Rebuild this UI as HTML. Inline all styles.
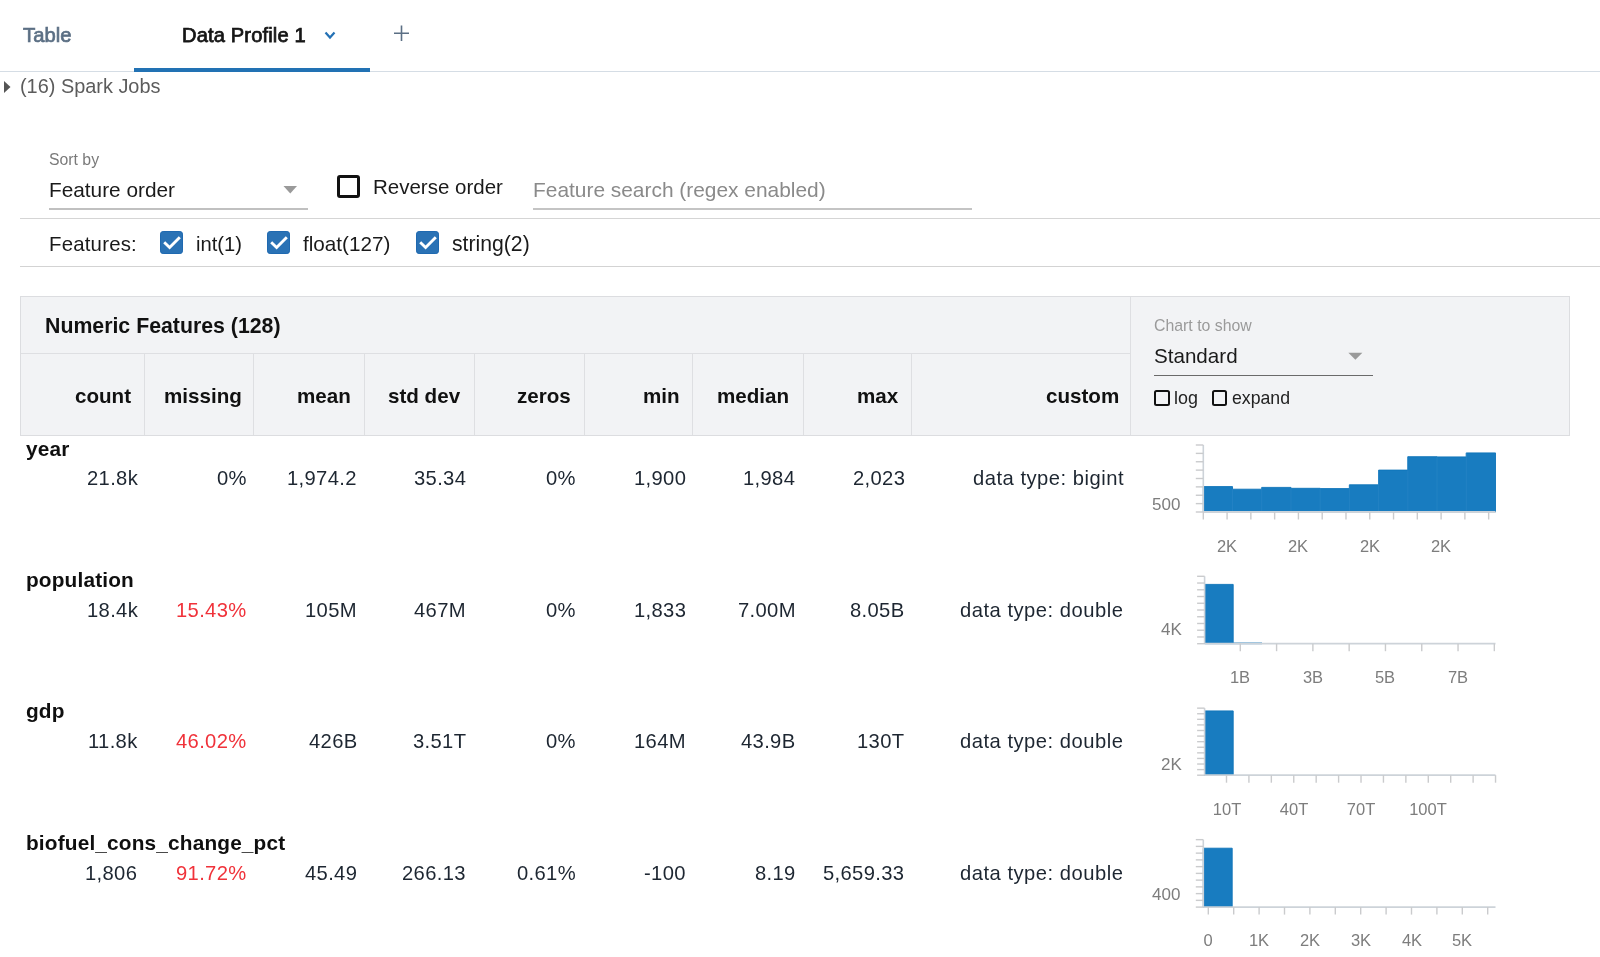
<!DOCTYPE html>
<html><head><meta charset="utf-8"><title>Data Profile</title>
<style>
html,body{margin:0;padding:0;background:#fff;width:1600px;height:957px;overflow:hidden;position:relative}
body{font-family:"Liberation Sans",sans-serif}
.t{position:absolute;white-space:pre;line-height:normal;will-change:transform}
.r{position:absolute;box-sizing:content-box}
svg.r{display:block}
</style></head><body>
<div class="t" style="left:22.5px;top:24px;font-size:20.2px;font-weight:400;color:#5b6f84;-webkit-text-stroke:0.7px #5b6f84;letter-spacing:0.05px;">Table</div>
<div class="t" style="left:182.3px;top:24px;font-size:20.1px;font-weight:400;color:#161616;-webkit-text-stroke:0.75px #161616;letter-spacing:0.15px;">Data Profile 1</div>
<svg class="r" style="left:322px;top:29px" width="16" height="14" viewBox="0 0 16 14"><path d="M3.5 3.5 L8 8.5 L12.5 3.5" fill="none" stroke="#2471b5" stroke-width="2.2"/></svg>
<svg class="r" style="left:392px;top:24px" width="19" height="19" viewBox="0 0 19 19"><path d="M9.5 1.5 V17 M2 9.2 H17" fill="none" stroke="#5b6f84" stroke-width="1.6"/></svg>
<div class="r" style="left:0px;top:71px;width:1600px;height:1px;background:#d5dde5;"></div>
<div class="r" style="left:134px;top:68px;width:236px;height:4px;background:#2272b4;"></div>
<svg class="r" style="left:2px;top:80px" width="10" height="14" viewBox="0 0 10 14"><path d="M2 1 L8.5 7 L2 13 Z" fill="#555"/></svg>
<div class="t" style="left:20px;top:75px;font-size:19.9px;font-weight:400;color:#5c5c5c;">(16) Spark Jobs</div>
<div class="t" style="left:49px;top:151px;font-size:15.8px;font-weight:400;color:#7a7a7a;">Sort by</div>
<div class="t" style="left:49px;top:178px;font-size:20.8px;font-weight:400;color:#1a1a1a;">Feature order</div>
<svg class="r" style="left:282px;top:184px" width="17" height="11" viewBox="0 0 17 11"><path d="M1.5 2 L15 2 L8.25 9.5 Z" fill="#9a9a9a"/></svg>
<div class="r" style="left:49px;top:208px;width:259px;height:2px;background:#c0c0c0;"></div>
<div class="r" style="left:337px;top:174.5px;width:17px;height:17px;border:3px solid #111;border-radius:3px"></div>
<div class="t" style="left:372.5px;top:175px;font-size:20.5px;font-weight:400;color:#1a1a1a;">Reverse order</div>
<div class="t" style="left:533px;top:178px;font-size:20.9px;font-weight:400;color:#8a8a8a;">Feature search (regex enabled)</div>
<div class="r" style="left:533px;top:208px;width:439px;height:2px;background:#c4c4c4;"></div>
<div class="r" style="left:20px;top:218px;width:1580px;height:1px;background:#d5d5d5;"></div>
<div class="t" style="left:48.6px;top:233px;font-size:20.4px;font-weight:400;color:#1a1a1a;letter-spacing:0.2px;">Features:</div>
<svg class="r" style="left:160px;top:231px" width="23" height="23" viewBox="0 0 23 23"><rect x="0.5" y="0.5" width="22" height="22" rx="2.6" fill="#2a72b5" stroke="#1f69b0"/><path d="M4.2 11.3 L9.6 16.5 L19.8 6.2" fill="none" stroke="#fff" stroke-width="2.9"/></svg>
<svg class="r" style="left:267px;top:231px" width="23" height="23" viewBox="0 0 23 23"><rect x="0.5" y="0.5" width="22" height="22" rx="2.6" fill="#2a72b5" stroke="#1f69b0"/><path d="M4.2 11.3 L9.6 16.5 L19.8 6.2" fill="none" stroke="#fff" stroke-width="2.9"/></svg>
<svg class="r" style="left:416px;top:231px" width="23" height="23" viewBox="0 0 23 23"><rect x="0.5" y="0.5" width="22" height="22" rx="2.6" fill="#2a72b5" stroke="#1f69b0"/><path d="M4.2 11.3 L9.6 16.5 L19.8 6.2" fill="none" stroke="#fff" stroke-width="2.9"/></svg>
<div class="t" style="left:196px;top:233px;font-size:20.2px;font-weight:400;color:#1a1a1a;">int(1)</div>
<div class="t" style="left:302.5px;top:232px;font-size:20.7px;font-weight:400;color:#1a1a1a;">float(127)</div>
<div class="t" style="left:451.5px;top:232px;font-size:21.2px;font-weight:400;color:#1a1a1a;">string(2)</div>
<div class="r" style="left:20px;top:266px;width:1580px;height:1px;background:#d3d3d3;"></div>
<div class="r" style="left:20px;top:296px;width:1548px;height:138px;background:#f2f3f5;border:1px solid #dcdde0"></div>
<div class="r" style="left:21px;top:353px;width:1110px;height:1px;background:#dedfe2;"></div>
<div class="r" style="left:144px;top:354px;width:1px;height:81px;background:#dedfe2;"></div>
<div class="r" style="left:253px;top:354px;width:1px;height:81px;background:#dedfe2;"></div>
<div class="r" style="left:364px;top:354px;width:1px;height:81px;background:#dedfe2;"></div>
<div class="r" style="left:474px;top:354px;width:1px;height:81px;background:#dedfe2;"></div>
<div class="r" style="left:584px;top:354px;width:1px;height:81px;background:#dedfe2;"></div>
<div class="r" style="left:692px;top:354px;width:1px;height:81px;background:#dedfe2;"></div>
<div class="r" style="left:803px;top:354px;width:1px;height:81px;background:#dedfe2;"></div>
<div class="r" style="left:911px;top:354px;width:1px;height:81px;background:#dedfe2;"></div>
<div class="r" style="left:1130px;top:297px;width:1px;height:138px;background:#dedfe2;"></div>
<div class="t" style="left:44.5px;top:314px;font-size:21.3px;font-weight:700;color:#111;">Numeric Features (128)</div>
<div class="t" style="right:1468.8px;text-align:right;top:384px;font-size:20.6px;font-weight:700;color:#111;">count</div>
<div class="t" style="right:1357.9px;text-align:right;top:384px;font-size:20.6px;font-weight:700;color:#111;">missing</div>
<div class="t" style="right:1249.5px;text-align:right;top:384px;font-size:20.6px;font-weight:700;color:#111;">mean</div>
<div class="t" style="right:1139.8px;text-align:right;top:384px;font-size:20.6px;font-weight:700;color:#111;">std dev</div>
<div class="t" style="right:1029.55px;text-align:right;top:384px;font-size:20.6px;font-weight:700;color:#111;">zeros</div>
<div class="t" style="right:920.8px;text-align:right;top:384px;font-size:20.6px;font-weight:700;color:#111;">min</div>
<div class="t" style="right:810.6999999999999px;text-align:right;top:384px;font-size:20.6px;font-weight:700;color:#111;">median</div>
<div class="t" style="right:702.0px;text-align:right;top:384px;font-size:20.6px;font-weight:700;color:#111;">max</div>
<div class="t" style="right:480.89999999999986px;text-align:right;top:384px;font-size:20.6px;font-weight:700;color:#111;">custom</div>
<div class="t" style="left:1154px;top:317px;font-size:15.85px;font-weight:400;color:#9a9a9a;">Chart to show</div>
<div class="t" style="left:1153.5px;top:344px;font-size:20.6px;font-weight:400;color:#1a1a1a;">Standard</div>
<svg class="r" style="left:1347px;top:351px" width="17" height="11" viewBox="0 0 17 11"><path d="M1.4 1.8 L15.4 1.8 L8.4 8.8 Z" fill="#9a9a9a"/></svg>
<div class="r" style="left:1154px;top:374.5px;width:219px;height:1.5px;background:#6a6a6a;"></div>
<div class="r" style="left:1154px;top:390px;width:11.8px;height:11.8px;border:2.7px solid #111;border-radius:2.5px"></div>
<div class="t" style="left:1174px;top:388px;font-size:17.9px;font-weight:400;color:#222;">log</div>
<div class="r" style="left:1211.5px;top:390px;width:11.8px;height:11.8px;border:2.7px solid #111;border-radius:2.5px"></div>
<div class="t" style="left:1232px;top:388px;font-size:17.7px;font-weight:400;color:#222;">expand</div>
<div class="t" style="left:25.5px;top:437px;font-size:20.8px;font-weight:700;color:#0f0f0f;letter-spacing:0.17px;">year</div>
<div class="t" style="right:1462.25px;text-align:right;top:467px;font-size:20.2px;font-weight:400;color:#1d2631;letter-spacing:0.35px;">21.8k</div>
<div class="t" style="right:1353.15px;text-align:right;top:467px;font-size:20.2px;font-weight:400;color:#1d2631;letter-spacing:0.35px;">0%</div>
<div class="t" style="right:1242.75px;text-align:right;top:467px;font-size:20.2px;font-weight:400;color:#1d2631;letter-spacing:0.35px;">1,974.2</div>
<div class="t" style="right:1134.05px;text-align:right;top:467px;font-size:20.2px;font-weight:400;color:#1d2631;letter-spacing:0.35px;">35.34</div>
<div class="t" style="right:1023.9px;text-align:right;top:467px;font-size:20.2px;font-weight:400;color:#1d2631;letter-spacing:0.35px;">0%</div>
<div class="t" style="right:914.15px;text-align:right;top:467px;font-size:20.2px;font-weight:400;color:#1d2631;letter-spacing:0.35px;">1,900</div>
<div class="t" style="right:804.25px;text-align:right;top:467px;font-size:20.2px;font-weight:400;color:#1d2631;letter-spacing:0.35px;">1,984</div>
<div class="t" style="right:695.15px;text-align:right;top:467px;font-size:20.2px;font-weight:400;color:#1d2631;letter-spacing:0.35px;">2,023</div>
<div class="t" style="right:476.29999999999995px;text-align:right;top:467px;font-size:20.2px;font-weight:400;color:#1d2631;letter-spacing:0.5px;">data type: bigint</div>
<div class="t" style="left:25.5px;top:568px;font-size:20.8px;font-weight:700;color:#0f0f0f;letter-spacing:0.17px;">population</div>
<div class="t" style="right:1462.25px;text-align:right;top:599px;font-size:20.2px;font-weight:400;color:#1d2631;letter-spacing:0.35px;">18.4k</div>
<div class="t" style="right:1353.15px;text-align:right;top:599px;font-size:20.2px;font-weight:400;color:#f0323a;letter-spacing:0.35px;">15.43%</div>
<div class="t" style="right:1242.75px;text-align:right;top:599px;font-size:20.2px;font-weight:400;color:#1d2631;letter-spacing:0.35px;">105M</div>
<div class="t" style="right:1134.05px;text-align:right;top:599px;font-size:20.2px;font-weight:400;color:#1d2631;letter-spacing:0.35px;">467M</div>
<div class="t" style="right:1023.9px;text-align:right;top:599px;font-size:20.2px;font-weight:400;color:#1d2631;letter-spacing:0.35px;">0%</div>
<div class="t" style="right:914.15px;text-align:right;top:599px;font-size:20.2px;font-weight:400;color:#1d2631;letter-spacing:0.35px;">1,833</div>
<div class="t" style="right:804.25px;text-align:right;top:599px;font-size:20.2px;font-weight:400;color:#1d2631;letter-spacing:0.35px;">7.00M</div>
<div class="t" style="right:695.15px;text-align:right;top:599px;font-size:20.2px;font-weight:400;color:#1d2631;letter-spacing:0.35px;">8.05B</div>
<div class="t" style="right:476.29999999999995px;text-align:right;top:599px;font-size:20.2px;font-weight:400;color:#1d2631;letter-spacing:0.5px;">data type: double</div>
<div class="t" style="left:25.5px;top:699px;font-size:20.8px;font-weight:700;color:#0f0f0f;letter-spacing:0.17px;">gdp</div>
<div class="t" style="right:1462.25px;text-align:right;top:730px;font-size:20.2px;font-weight:400;color:#1d2631;letter-spacing:0.35px;">11.8k</div>
<div class="t" style="right:1353.15px;text-align:right;top:730px;font-size:20.2px;font-weight:400;color:#f0323a;letter-spacing:0.35px;">46.02%</div>
<div class="t" style="right:1242.75px;text-align:right;top:730px;font-size:20.2px;font-weight:400;color:#1d2631;letter-spacing:0.35px;">426B</div>
<div class="t" style="right:1134.05px;text-align:right;top:730px;font-size:20.2px;font-weight:400;color:#1d2631;letter-spacing:0.35px;">3.51T</div>
<div class="t" style="right:1023.9px;text-align:right;top:730px;font-size:20.2px;font-weight:400;color:#1d2631;letter-spacing:0.35px;">0%</div>
<div class="t" style="right:914.15px;text-align:right;top:730px;font-size:20.2px;font-weight:400;color:#1d2631;letter-spacing:0.35px;">164M</div>
<div class="t" style="right:804.25px;text-align:right;top:730px;font-size:20.2px;font-weight:400;color:#1d2631;letter-spacing:0.35px;">43.9B</div>
<div class="t" style="right:695.15px;text-align:right;top:730px;font-size:20.2px;font-weight:400;color:#1d2631;letter-spacing:0.35px;">130T</div>
<div class="t" style="right:476.29999999999995px;text-align:right;top:730px;font-size:20.2px;font-weight:400;color:#1d2631;letter-spacing:0.5px;">data type: double</div>
<div class="t" style="left:25.5px;top:831px;font-size:20.8px;font-weight:700;color:#0f0f0f;letter-spacing:0.17px;">biofuel_cons_change_pct</div>
<div class="t" style="right:1462.25px;text-align:right;top:862px;font-size:20.2px;font-weight:400;color:#1d2631;letter-spacing:0.35px;">1,806</div>
<div class="t" style="right:1353.15px;text-align:right;top:862px;font-size:20.2px;font-weight:400;color:#f0323a;letter-spacing:0.35px;">91.72%</div>
<div class="t" style="right:1242.75px;text-align:right;top:862px;font-size:20.2px;font-weight:400;color:#1d2631;letter-spacing:0.35px;">45.49</div>
<div class="t" style="right:1134.05px;text-align:right;top:862px;font-size:20.2px;font-weight:400;color:#1d2631;letter-spacing:0.35px;">266.13</div>
<div class="t" style="right:1023.9px;text-align:right;top:862px;font-size:20.2px;font-weight:400;color:#1d2631;letter-spacing:0.35px;">0.61%</div>
<div class="t" style="right:914.15px;text-align:right;top:862px;font-size:20.2px;font-weight:400;color:#1d2631;letter-spacing:0.35px;">-100</div>
<div class="t" style="right:804.25px;text-align:right;top:862px;font-size:20.2px;font-weight:400;color:#1d2631;letter-spacing:0.35px;">8.19</div>
<div class="t" style="right:695.15px;text-align:right;top:862px;font-size:20.2px;font-weight:400;color:#1d2631;letter-spacing:0.35px;">5,659.33</div>
<div class="t" style="right:476.29999999999995px;text-align:right;top:862px;font-size:20.2px;font-weight:400;color:#1d2631;letter-spacing:0.5px;">data type: double</div>
<svg class="r" style="left:0;top:0" width="1600" height="957" viewBox="0 0 1600 957"><path d="M1203.3 512 L1203.30 486.6 L1232.52 486.6 L1232.52 489.2 L1261.74 489.2 L1261.74 487.4 L1290.96 487.4 L1290.96 488.3 L1320.18 488.3 L1320.18 488.6 L1349.40 488.6 L1349.40 484.8 L1378.62 484.8 L1378.62 470.1 L1407.84 470.1 L1407.84 456.7 L1437.06 456.7 L1437.06 456.9 L1466.28 456.9 L1466.28 452.9 L1495.50 452.9 L1495.50 512 Z" fill="#187cc0" stroke="#0e74b9" stroke-width="0.9"/><line x1="1232.52" y1="489.2" x2="1232.52" y2="512" stroke="#2a86c6" stroke-width="0.6"/><line x1="1261.74" y1="487.4" x2="1261.74" y2="512" stroke="#2a86c6" stroke-width="0.6"/><line x1="1290.96" y1="488.3" x2="1290.96" y2="512" stroke="#2a86c6" stroke-width="0.6"/><line x1="1320.18" y1="488.6" x2="1320.18" y2="512" stroke="#2a86c6" stroke-width="0.6"/><line x1="1349.40" y1="484.8" x2="1349.40" y2="512" stroke="#2a86c6" stroke-width="0.6"/><line x1="1378.62" y1="470.1" x2="1378.62" y2="512" stroke="#2a86c6" stroke-width="0.6"/><line x1="1407.84" y1="456.7" x2="1407.84" y2="512" stroke="#2a86c6" stroke-width="0.6"/><line x1="1437.06" y1="456.9" x2="1437.06" y2="512" stroke="#2a86c6" stroke-width="0.6"/><line x1="1466.28" y1="452.9" x2="1466.28" y2="512" stroke="#2a86c6" stroke-width="0.6"/><line x1="1203.3" y1="445" x2="1203.3" y2="512" stroke="#cdd3d9" stroke-width="1.6"/><line x1="1195.8" y1="445.00" x2="1203.3" y2="445.00" stroke="#cacbcd" stroke-width="1.4"/><line x1="1195.8" y1="453.38" x2="1203.3" y2="453.38" stroke="#cacbcd" stroke-width="1.4"/><line x1="1195.8" y1="461.75" x2="1203.3" y2="461.75" stroke="#cacbcd" stroke-width="1.4"/><line x1="1195.8" y1="470.12" x2="1203.3" y2="470.12" stroke="#cacbcd" stroke-width="1.4"/><line x1="1195.8" y1="478.50" x2="1203.3" y2="478.50" stroke="#cacbcd" stroke-width="1.4"/><line x1="1195.8" y1="486.88" x2="1203.3" y2="486.88" stroke="#cacbcd" stroke-width="1.4"/><line x1="1195.8" y1="495.25" x2="1203.3" y2="495.25" stroke="#cacbcd" stroke-width="1.4"/><line x1="1195.8" y1="503.62" x2="1203.3" y2="503.62" stroke="#cacbcd" stroke-width="1.4"/><line x1="1195.8" y1="512.00" x2="1203.3" y2="512.00" stroke="#cacbcd" stroke-width="1.4"/><line x1="1203.3" y1="512" x2="1495.5" y2="512" stroke="#cdd3d9" stroke-width="1.8"/><line x1="1203.30" y1="512" x2="1203.30" y2="519.5" stroke="#cacbcd" stroke-width="1.4"/><line x1="1227.08" y1="512" x2="1227.08" y2="519.5" stroke="#cacbcd" stroke-width="1.4"/><line x1="1250.86" y1="512" x2="1250.86" y2="519.5" stroke="#cacbcd" stroke-width="1.4"/><line x1="1274.64" y1="512" x2="1274.64" y2="519.5" stroke="#cacbcd" stroke-width="1.4"/><line x1="1298.42" y1="512" x2="1298.42" y2="519.5" stroke="#cacbcd" stroke-width="1.4"/><line x1="1322.20" y1="512" x2="1322.20" y2="519.5" stroke="#cacbcd" stroke-width="1.4"/><line x1="1345.98" y1="512" x2="1345.98" y2="519.5" stroke="#cacbcd" stroke-width="1.4"/><line x1="1369.76" y1="512" x2="1369.76" y2="519.5" stroke="#cacbcd" stroke-width="1.4"/><line x1="1393.54" y1="512" x2="1393.54" y2="519.5" stroke="#cacbcd" stroke-width="1.4"/><line x1="1417.32" y1="512" x2="1417.32" y2="519.5" stroke="#cacbcd" stroke-width="1.4"/><line x1="1441.10" y1="512" x2="1441.10" y2="519.5" stroke="#cacbcd" stroke-width="1.4"/><line x1="1464.88" y1="512" x2="1464.88" y2="519.5" stroke="#cacbcd" stroke-width="1.4"/><line x1="1488.66" y1="512" x2="1488.66" y2="519.5" stroke="#cacbcd" stroke-width="1.4"/></svg>
<div class="t" style="right:419.20000000000005px;text-align:right;top:494.6px;font-size:17px;font-weight:400;color:#7d7d7d;">500</div>
<div class="t" style="left:1177.08px;width:100px;text-align:center;top:536.6px;font-size:16.5px;color:#7d7d7d">2K</div>
<div class="t" style="left:1248.42px;width:100px;text-align:center;top:536.6px;font-size:16.5px;color:#7d7d7d">2K</div>
<div class="t" style="left:1319.76px;width:100px;text-align:center;top:536.6px;font-size:16.5px;color:#7d7d7d">2K</div>
<div class="t" style="left:1391.10px;width:100px;text-align:center;top:536.6px;font-size:16.5px;color:#7d7d7d">2K</div>
<svg class="r" style="left:0;top:0" width="1600" height="957" viewBox="0 0 1600 957"><path d="M1204.6 643.7 L1204.60 584.4 L1233.20 584.4 L1233.20 643.0 L1262.00 643.0 L1262.00 643.7 Z" fill="#187cc0" stroke="#0e74b9" stroke-width="0.9"/><line x1="1233.20" y1="643.0" x2="1233.20" y2="643.7" stroke="#2a86c6" stroke-width="0.6"/><line x1="1204.6" y1="576.3" x2="1204.6" y2="643.7" stroke="#cdd3d9" stroke-width="1.6"/><line x1="1197.1" y1="576.30" x2="1204.6" y2="576.30" stroke="#cacbcd" stroke-width="1.4"/><line x1="1197.1" y1="583.04" x2="1204.6" y2="583.04" stroke="#cacbcd" stroke-width="1.4"/><line x1="1197.1" y1="589.78" x2="1204.6" y2="589.78" stroke="#cacbcd" stroke-width="1.4"/><line x1="1197.1" y1="596.52" x2="1204.6" y2="596.52" stroke="#cacbcd" stroke-width="1.4"/><line x1="1197.1" y1="603.26" x2="1204.6" y2="603.26" stroke="#cacbcd" stroke-width="1.4"/><line x1="1197.1" y1="610.00" x2="1204.6" y2="610.00" stroke="#cacbcd" stroke-width="1.4"/><line x1="1197.1" y1="616.74" x2="1204.6" y2="616.74" stroke="#cacbcd" stroke-width="1.4"/><line x1="1197.1" y1="623.48" x2="1204.6" y2="623.48" stroke="#cacbcd" stroke-width="1.4"/><line x1="1197.1" y1="630.22" x2="1204.6" y2="630.22" stroke="#cacbcd" stroke-width="1.4"/><line x1="1197.1" y1="636.96" x2="1204.6" y2="636.96" stroke="#cacbcd" stroke-width="1.4"/><line x1="1197.1" y1="643.70" x2="1204.6" y2="643.70" stroke="#cacbcd" stroke-width="1.4"/><line x1="1204.6" y1="643.7" x2="1495.5" y2="643.7" stroke="#cdd3d9" stroke-width="1.8"/><line x1="1240.30" y1="643.7" x2="1240.30" y2="651.2" stroke="#cacbcd" stroke-width="1.4"/><line x1="1276.59" y1="643.7" x2="1276.59" y2="651.2" stroke="#cacbcd" stroke-width="1.4"/><line x1="1312.88" y1="643.7" x2="1312.88" y2="651.2" stroke="#cacbcd" stroke-width="1.4"/><line x1="1349.17" y1="643.7" x2="1349.17" y2="651.2" stroke="#cacbcd" stroke-width="1.4"/><line x1="1385.46" y1="643.7" x2="1385.46" y2="651.2" stroke="#cacbcd" stroke-width="1.4"/><line x1="1421.75" y1="643.7" x2="1421.75" y2="651.2" stroke="#cacbcd" stroke-width="1.4"/><line x1="1458.04" y1="643.7" x2="1458.04" y2="651.2" stroke="#cacbcd" stroke-width="1.4"/><line x1="1494.33" y1="643.7" x2="1494.33" y2="651.2" stroke="#cacbcd" stroke-width="1.4"/></svg>
<div class="t" style="right:417.9000000000001px;text-align:right;top:620.2px;font-size:17px;font-weight:400;color:#7d7d7d;">4K</div>
<div class="t" style="left:1190.30px;width:100px;text-align:center;top:667.9px;font-size:16.5px;color:#7d7d7d">1B</div>
<div class="t" style="left:1262.88px;width:100px;text-align:center;top:667.9px;font-size:16.5px;color:#7d7d7d">3B</div>
<div class="t" style="left:1335.46px;width:100px;text-align:center;top:667.9px;font-size:16.5px;color:#7d7d7d">5B</div>
<div class="t" style="left:1408.04px;width:100px;text-align:center;top:667.9px;font-size:16.5px;color:#7d7d7d">7B</div>
<svg class="r" style="left:0;top:0" width="1600" height="957" viewBox="0 0 1600 957"><path d="M1204.6 775.2 L1204.60 710.9 L1233.20 710.9 L1233.20 775.2 Z" fill="#187cc0" stroke="#0e74b9" stroke-width="0.9"/><line x1="1204.6" y1="708.15" x2="1204.6" y2="775.2" stroke="#cdd3d9" stroke-width="1.6"/><line x1="1197.1" y1="708.15" x2="1204.6" y2="708.15" stroke="#cacbcd" stroke-width="1.4"/><line x1="1197.1" y1="713.74" x2="1204.6" y2="713.74" stroke="#cacbcd" stroke-width="1.4"/><line x1="1197.1" y1="719.33" x2="1204.6" y2="719.33" stroke="#cacbcd" stroke-width="1.4"/><line x1="1197.1" y1="724.91" x2="1204.6" y2="724.91" stroke="#cacbcd" stroke-width="1.4"/><line x1="1197.1" y1="730.50" x2="1204.6" y2="730.50" stroke="#cacbcd" stroke-width="1.4"/><line x1="1197.1" y1="736.09" x2="1204.6" y2="736.09" stroke="#cacbcd" stroke-width="1.4"/><line x1="1197.1" y1="741.67" x2="1204.6" y2="741.67" stroke="#cacbcd" stroke-width="1.4"/><line x1="1197.1" y1="747.26" x2="1204.6" y2="747.26" stroke="#cacbcd" stroke-width="1.4"/><line x1="1197.1" y1="752.85" x2="1204.6" y2="752.85" stroke="#cacbcd" stroke-width="1.4"/><line x1="1197.1" y1="758.44" x2="1204.6" y2="758.44" stroke="#cacbcd" stroke-width="1.4"/><line x1="1197.1" y1="764.03" x2="1204.6" y2="764.03" stroke="#cacbcd" stroke-width="1.4"/><line x1="1197.1" y1="769.61" x2="1204.6" y2="769.61" stroke="#cacbcd" stroke-width="1.4"/><line x1="1197.1" y1="775.20" x2="1204.6" y2="775.20" stroke="#cacbcd" stroke-width="1.4"/><line x1="1204.6" y1="775.2" x2="1495.5" y2="775.2" stroke="#cdd3d9" stroke-width="1.8"/><line x1="1226.50" y1="775.2" x2="1226.50" y2="782.7" stroke="#cacbcd" stroke-width="1.4"/><line x1="1248.92" y1="775.2" x2="1248.92" y2="782.7" stroke="#cacbcd" stroke-width="1.4"/><line x1="1271.34" y1="775.2" x2="1271.34" y2="782.7" stroke="#cacbcd" stroke-width="1.4"/><line x1="1293.76" y1="775.2" x2="1293.76" y2="782.7" stroke="#cacbcd" stroke-width="1.4"/><line x1="1316.18" y1="775.2" x2="1316.18" y2="782.7" stroke="#cacbcd" stroke-width="1.4"/><line x1="1338.60" y1="775.2" x2="1338.60" y2="782.7" stroke="#cacbcd" stroke-width="1.4"/><line x1="1361.02" y1="775.2" x2="1361.02" y2="782.7" stroke="#cacbcd" stroke-width="1.4"/><line x1="1383.44" y1="775.2" x2="1383.44" y2="782.7" stroke="#cacbcd" stroke-width="1.4"/><line x1="1405.86" y1="775.2" x2="1405.86" y2="782.7" stroke="#cacbcd" stroke-width="1.4"/><line x1="1428.28" y1="775.2" x2="1428.28" y2="782.7" stroke="#cacbcd" stroke-width="1.4"/><line x1="1450.70" y1="775.2" x2="1450.70" y2="782.7" stroke="#cacbcd" stroke-width="1.4"/><line x1="1473.12" y1="775.2" x2="1473.12" y2="782.7" stroke="#cacbcd" stroke-width="1.4"/><line x1="1495.54" y1="775.2" x2="1495.54" y2="782.7" stroke="#cacbcd" stroke-width="1.4"/></svg>
<div class="t" style="right:417.9000000000001px;text-align:right;top:754.6px;font-size:17px;font-weight:400;color:#7d7d7d;">2K</div>
<div class="t" style="left:1176.50px;width:100px;text-align:center;top:799.7px;font-size:16.5px;color:#7d7d7d">10T</div>
<div class="t" style="left:1243.76px;width:100px;text-align:center;top:799.7px;font-size:16.5px;color:#7d7d7d">40T</div>
<div class="t" style="left:1311.02px;width:100px;text-align:center;top:799.7px;font-size:16.5px;color:#7d7d7d">70T</div>
<div class="t" style="left:1378.28px;width:100px;text-align:center;top:799.7px;font-size:16.5px;color:#7d7d7d">100T</div>
<svg class="r" style="left:0;top:0" width="1600" height="957" viewBox="0 0 1600 957"><path d="M1203.3 907.1 L1203.30 848.2 L1232.20 848.2 L1232.20 907.1 Z" fill="#187cc0" stroke="#0e74b9" stroke-width="0.9"/><line x1="1203.3" y1="839.65" x2="1203.3" y2="907.1" stroke="#cdd3d9" stroke-width="1.6"/><line x1="1195.8" y1="839.65" x2="1203.3" y2="839.65" stroke="#cacbcd" stroke-width="1.4"/><line x1="1195.8" y1="846.39" x2="1203.3" y2="846.39" stroke="#cacbcd" stroke-width="1.4"/><line x1="1195.8" y1="853.14" x2="1203.3" y2="853.14" stroke="#cacbcd" stroke-width="1.4"/><line x1="1195.8" y1="859.88" x2="1203.3" y2="859.88" stroke="#cacbcd" stroke-width="1.4"/><line x1="1195.8" y1="866.63" x2="1203.3" y2="866.63" stroke="#cacbcd" stroke-width="1.4"/><line x1="1195.8" y1="873.38" x2="1203.3" y2="873.38" stroke="#cacbcd" stroke-width="1.4"/><line x1="1195.8" y1="880.12" x2="1203.3" y2="880.12" stroke="#cacbcd" stroke-width="1.4"/><line x1="1195.8" y1="886.87" x2="1203.3" y2="886.87" stroke="#cacbcd" stroke-width="1.4"/><line x1="1195.8" y1="893.61" x2="1203.3" y2="893.61" stroke="#cacbcd" stroke-width="1.4"/><line x1="1195.8" y1="900.36" x2="1203.3" y2="900.36" stroke="#cacbcd" stroke-width="1.4"/><line x1="1195.8" y1="907.10" x2="1203.3" y2="907.10" stroke="#cacbcd" stroke-width="1.4"/><line x1="1203.3" y1="907.1" x2="1495.5" y2="907.1" stroke="#cdd3d9" stroke-width="1.8"/><line x1="1208.30" y1="907.1" x2="1208.30" y2="914.6" stroke="#cacbcd" stroke-width="1.4"/><line x1="1233.70" y1="907.1" x2="1233.70" y2="914.6" stroke="#cacbcd" stroke-width="1.4"/><line x1="1259.10" y1="907.1" x2="1259.10" y2="914.6" stroke="#cacbcd" stroke-width="1.4"/><line x1="1284.50" y1="907.1" x2="1284.50" y2="914.6" stroke="#cacbcd" stroke-width="1.4"/><line x1="1309.90" y1="907.1" x2="1309.90" y2="914.6" stroke="#cacbcd" stroke-width="1.4"/><line x1="1335.30" y1="907.1" x2="1335.30" y2="914.6" stroke="#cacbcd" stroke-width="1.4"/><line x1="1360.70" y1="907.1" x2="1360.70" y2="914.6" stroke="#cacbcd" stroke-width="1.4"/><line x1="1386.10" y1="907.1" x2="1386.10" y2="914.6" stroke="#cacbcd" stroke-width="1.4"/><line x1="1411.50" y1="907.1" x2="1411.50" y2="914.6" stroke="#cacbcd" stroke-width="1.4"/><line x1="1436.90" y1="907.1" x2="1436.90" y2="914.6" stroke="#cacbcd" stroke-width="1.4"/><line x1="1462.30" y1="907.1" x2="1462.30" y2="914.6" stroke="#cacbcd" stroke-width="1.4"/><line x1="1487.70" y1="907.1" x2="1487.70" y2="914.6" stroke="#cacbcd" stroke-width="1.4"/></svg>
<div class="t" style="right:419.20000000000005px;text-align:right;top:884.6px;font-size:17px;font-weight:400;color:#7d7d7d;">400</div>
<div class="t" style="left:1158.30px;width:100px;text-align:center;top:931px;font-size:16.5px;color:#7d7d7d">0</div>
<div class="t" style="left:1209.10px;width:100px;text-align:center;top:931px;font-size:16.5px;color:#7d7d7d">1K</div>
<div class="t" style="left:1259.90px;width:100px;text-align:center;top:931px;font-size:16.5px;color:#7d7d7d">2K</div>
<div class="t" style="left:1310.70px;width:100px;text-align:center;top:931px;font-size:16.5px;color:#7d7d7d">3K</div>
<div class="t" style="left:1361.50px;width:100px;text-align:center;top:931px;font-size:16.5px;color:#7d7d7d">4K</div>
<div class="t" style="left:1412.30px;width:100px;text-align:center;top:931px;font-size:16.5px;color:#7d7d7d">5K</div>
</body></html>
